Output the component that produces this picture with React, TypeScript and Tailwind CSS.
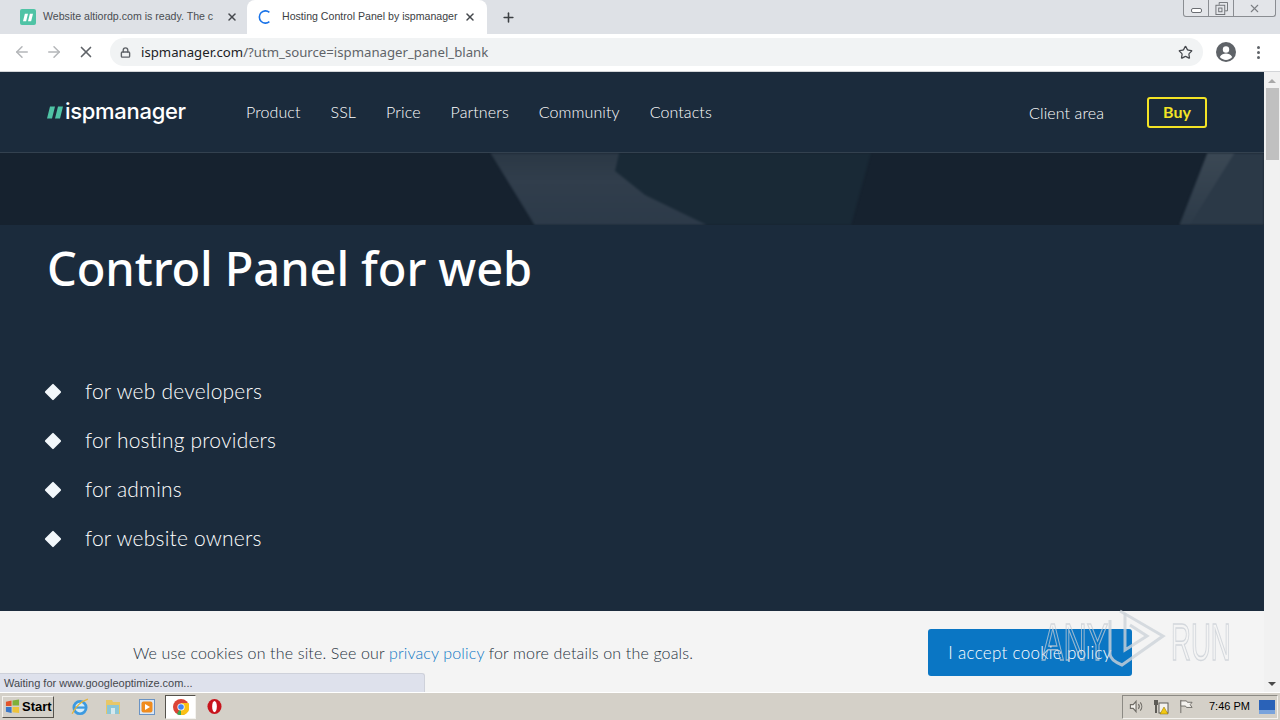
import { ArrowLeft, ArrowRight, Lock, Plus, Star, X } from "lucide-react";

const NAV_ITEMS = ["Product", "SSL", "Price", "Partners", "Community", "Contacts"];
const AUDIENCES = ["for web developers", "for hosting providers", "for admins", "for website owners"];

function LogoMark({ className }: { className: string }) {
  return (
    <svg viewBox="0 0 16 12" className={className}>
      <path d="M3 0h5L5 12H0z M11 0h5l-3 12H8z" fill="#4fc3a5" />
    </svg>
  );
}

function Diamond() {
  return <span className="w-[12px] h-[12px] rotate-45 rounded-[1px] bg-[#f2f7fb] shrink-0" />;
}

function TabStrip() {
  return (
    <div className="h-[34px] bg-[#dee1e6] flex items-end shrink-0 relative font-['Liberation_Sans',sans-serif]">
      <div className="w-[247px] h-[34px] flex items-center pl-[20px] pr-[9px] text-[10.600px] text-[#4a4d52]">
        <span className="w-[16px] h-[16px] rounded-[2px] bg-[#4fc3a5] flex items-center justify-center shrink-0">
          <LogoMark className="w-[10px] h-[9px] [&>path]:fill-white" />
        </span>
        <span className="ml-[7px] whitespace-nowrap">Website altiordp.com is ready. The c</span>
        <X size={12} strokeWidth={3} className="ml-auto text-[#45484d] shrink-0" />
      </div>
      <div className="w-[240px] h-[34px] bg-white rounded-t-[8px] flex items-center pl-[11px] pr-[11px] text-[10.600px] text-[#3c4043]">
        <svg viewBox="0 0 16 16" className="w-[14px] h-[16px] shrink-0">
          <path d="M13 2.600A7 7 0 1 0 13 13.400" fill="none" stroke="#1a73e8" strokeWidth="1.800" />
        </svg>
        <span className="ml-[10px] whitespace-nowrap">Hosting Control Panel by ispmanager</span>
        <X size={12} strokeWidth={3} className="ml-auto text-[#45484d] shrink-0" />
      </div>
      <div className="h-[34px] flex items-center ml-[14px]">
        <Plus size={15} strokeWidth={2.5} className="text-[#3c4043]" />
      </div>
      <div className="absolute right-[4px] top-0 w-[93px] h-[17px] flex border border-t-0 border-[#8a8d92] rounded-b-[3px] bg-[#e3e5e9]">
        <div className="w-[25px] flex items-end justify-center pb-[3px] border-r border-[#8a8d92]">
          <span className="w-[11px] h-[5px] rounded-[2px] border border-[#6b6e73] bg-white" />
        </div>
        <div className="w-[25px] flex items-center justify-center border-r border-[#8a8d92]">
          <svg viewBox="0 0 14 14" className="w-[13px] h-[13px]" fill="none" stroke="#6b6e73">
            <path d="M4.500 3V.5h9v9H11" />
            <rect x="1" y="3.500" width="9.500" height="10" />
            <rect x="4" y="6.500" width="3.500" height="4" />
          </svg>
        </div>
        <div className="flex-1 flex items-center justify-center">
          <X size={13} strokeWidth={2} className="text-[#7b7e83]" />
        </div>
      </div>
    </div>
  );
}

function Toolbar() {
  return (
    <div className="h-[38px] bg-white flex items-center shrink-0 border-b border-[#d3d5d8] pb-[1px]">
      <ArrowLeft size={18} className="ml-[13px] text-[#b4b6b9]" />
      <ArrowRight size={18} className="ml-[14px] text-[#b4b6b9]" />
      <X size={18} strokeWidth={2.2} className="ml-[14px] text-[#5f6368]" />
      <div className="ml-[15px] w-[1093px] h-[28px] rounded-full bg-[#f1f3f4] flex items-center pl-[10px] pr-[10px] text-[13.200px] text-[#5f6368]">
        <Lock size={11} strokeWidth={3} className="text-[#5f6368] shrink-0" />
        <span className="ml-[10px] mt-[1px] whitespace-nowrap">
          <span className="text-[#202124]">ispmanager.com</span>/?utm_source=ispmanager_panel_blank
        </span>
        <Star size={15} strokeWidth={2} className="ml-auto text-[#45484d]" />
      </div>
      <svg viewBox="0 0 20 20" className="ml-[13px] w-[20px] h-[20px] shrink-0">
        <circle cx="10" cy="10" r="10" fill="#5f6368" />
        <circle cx="10" cy="7.500" r="3.200" fill="#fff" />
        <path d="M3.800 15c1.500-2.600 3.800-3.500 6.200-3.500s4.700.9 6.200 3.500c-1.500 1.800-3.700 2.900-6.200 2.900s-4.700-1.100-6.200-2.900z" fill="#fff" />
      </svg>
      <div className="ml-[21px] flex flex-col gap-[2px]">
        <span className="w-[3px] h-[3px] rounded-full bg-[#5f6368]" />
        <span className="w-[3px] h-[3px] rounded-full bg-[#5f6368]" />
        <span className="w-[3px] h-[3px] rounded-full bg-[#5f6368]" />
      </div>
    </div>
  );
}

function SiteHeader() {
  return (
    <header className="h-[81px] bg-[#1b2b3c] border-b border-[#33414f] flex items-center shrink-0 pl-[47px] pr-[57px] font-['Lato',sans-serif] text-white">
      <LogoMark className="w-[16px] h-[13px] mt-[1px]" />
      <span className="ml-[2px] w-[121px] text-[22px] leading-none font-['Inter',sans-serif] font-medium tracking-[-0.3px] pb-[2px] whitespace-nowrap">ispmanager</span>
      <nav className="ml-[60px] flex gap-[30px] text-[16px] font-light tracking-[0.1px]">
        {NAV_ITEMS.map((item) => (
          <span key={item}>{item}</span>
        ))}
      </nav>
      <span className="ml-auto mt-[1px] text-[16px] font-light tracking-[0.1px]">Client area</span>
      <span className="ml-[43px] w-[60px] h-[31px] rounded-[3px] border-2 border-[#f4e425] text-[#f4e425] font-bold text-[16px] flex items-center justify-center">Buy</span>
    </header>
  );
}

function Band() {
  return (
    <div className="h-[72px] bg-[#16222f] shrink-0 overflow-hidden">
      <svg viewBox="0 0 1264 72" className="w-full h-full block blur-[1px]" preserveAspectRatio="none">
        <defs>
          <linearGradient id="band-fade" x1="0" y1="0" x2="0" y2="1">
            <stop offset="0" stopColor="#2a3744" />
            <stop offset="0.4" stopColor="#313e4c" />
            <stop offset="1" stopColor="#2c3a49" />
          </linearGradient>
          <linearGradient id="band-right" x1="0" y1="0" x2="0" y2="1">
            <stop offset="0" stopColor="#3c4955" />
            <stop offset="1" stopColor="#2c3a48" />
          </linearGradient>
        </defs>
        <path d="M600 -4h272l-22 80H590z" fill="#192936" />
        <path d="M488 -4h132l-5 22 30 24 70 34H537z" fill="url(#band-fade)" />
        <path d="M1209 -4h60v80h-91z" fill="#2b3947" />
        <path d="M1209 -4h28l-50 80h-9z" fill="url(#band-right)" />
      </svg>
    </div>
  );
}

function Hero() {
  return (
    <section className="flex-1 bg-[#1b2b3c] pl-[48px] font-['Lato',sans-serif] text-white min-h-0">
      <h1 className="mt-[11px] -ml-[1px] text-[47px] leading-[64px] font-['Noto_Sans',sans-serif] font-medium tracking-[-0.1px]">Control Panel for web</h1>
      <ul className="mt-[77px] flex flex-col gap-[19px]">
        {AUDIENCES.map((a) => (
          <li key={a} className="flex items-center h-[30px] text-[21px] font-light tracking-[0.2px] -ml-[1px]">
            <Diamond />
            <span className="ml-[26px] -translate-y-[1px]">{a}</span>
          </li>
        ))}
      </ul>
    </section>
  );
}

function CookieBar() {
  return (
    <div className="h-[81px] bg-[#f4f4f4] flex items-center shrink-0 pl-[133px] font-['Lato',sans-serif] font-light text-[#25313d]">
      <span className="text-[16px] tracking-[0.15px] mt-[3px]">
        We use cookies on the site. See our <span className="text-[#0a76c4]">privacy policy</span> for more details on the goals.
      </span>
      <span className="ml-auto mr-[132px] mt-[2px] w-[204px] h-[47px] rounded-[3px] bg-[#0a76c4] text-white text-[17px] tracking-[0.3px] flex items-center justify-center whitespace-nowrap">I accept cookie policy</span>
    </div>
  );
}

function Scrollbar() {
  return (
    <div className="w-[16px] bg-[#f1f1f1] flex flex-col items-center shrink-0">
      <span className="mt-[7px] w-0 h-0 border-x-[4px] border-x-transparent border-b-[4px] border-b-[#a8a8a8]" />
      <span className="mt-[5px] w-[13px] h-[72px] bg-[#c0c0c0]" />
      <span className="mt-auto mb-[6px] w-0 h-0 border-x-[4px] border-x-transparent border-t-[4px] border-t-[#4a4a4a]" />
    </div>
  );
}

function Taskbar() {
  return (
    <div className="h-[28px] bg-[#d4d0c8] border-t border-white flex items-center shrink-0 relative">
      <div className="ml-[2px] w-[52px] h-[22px] flex items-center border border-[#f4f2ee] border-b-[#55524c] border-r-[#55524c] bg-[#d4d0c8] font-['Liberation_Sans',sans-serif] font-bold text-[13px] text-black">
        <svg viewBox="0 0 16 16" className="w-[15px] h-[15px] ml-[2px] shrink-0">
          <path d="M1 3l6-1.500V7.500H1z" fill="#e2552b" />
          <path d="M8 1.500l7-1V7H8z" fill="#7fb03a" />
          <path d="M1 8.500h6V15l-6-1.500z" fill="#3b78c9" />
          <path d="M8 8.500h7V15l-7-1z" fill="#eec33a" />
        </svg>
        <span className="ml-[2px]">Start</span>
      </div>
      <svg viewBox="0 0 16 16" className="ml-[17px] w-[18px] h-[18px] shrink-0">
        <circle cx="8" cy="8.500" r="5.500" fill="#d5ecf9" stroke="#3d9ae0" strokeWidth="2.400" />
        <path d="M3 8.500h10" stroke="#3d9ae0" strokeWidth="2" />
        <path d="M1 14C4 8 9 3 15 1" stroke="#e6b53c" strokeWidth="1.200" fill="none" />
      </svg>
      <svg viewBox="0 0 16 16" className="ml-[16px] w-[16px] h-[16px] shrink-0">
        <path d="M1 1h6l1 2h7v12H1z" fill="#e8c767" />
        <path d="M2 6h12v9H2z" fill="#8cc6d6" />
        <path d="M6 9h4v6H6z" fill="#d4e8ee" />
      </svg>
      <svg viewBox="0 0 16 16" className="ml-[18px] w-[16px] h-[16px] shrink-0">
        <rect x="0.500" y="0.500" width="15" height="15" fill="#dbe7f5" stroke="#6a93c4" />
        <rect x="2.500" y="2.500" width="11" height="11" rx="2" fill="#f08c1e" />
        <path d="M6 5l5 3-5 3z" fill="#fff" />
      </svg>
      <div className="ml-[10px] w-[31px] h-[24px] bg-white border border-[#55524c] border-b-[#f4f2ee] border-r-[#f4f2ee] flex items-center justify-center shrink-0">
        <svg viewBox="0 0 16 16" className="w-[16px] h-[16px]">
          <circle cx="8" cy="8" r="8" fill="#db4437" />
          <path d="M8 8L15 12A8 8 0 0 1 4 15z" fill="#3aa757" />
          <path d="M8 4h7.500A8 8 0 0 1 8 16z" fill="#fbc116" />
          <circle cx="8" cy="8" r="3.600" fill="#fff" />
          <circle cx="8" cy="8" r="2.800" fill="#4285f4" />
        </svg>
      </div>
      <svg viewBox="0 0 16 18" className="ml-[11px] w-[15px] h-[17px] shrink-0">
        <ellipse cx="8" cy="9" rx="7.500" ry="8" fill="#c8141c" />
        <ellipse cx="8" cy="9" rx="2.500" ry="6" fill="#fff" />
      </svg>
      <div className="ml-auto mr-[2px] w-[156px] h-[24px] flex items-center border border-[#8c8a84] border-b-[#f4f2ee] border-r-[#f4f2ee] pl-[6px]">
        <svg viewBox="0 0 16 16" className="w-[15px] h-[15px] shrink-0" fill="none" stroke="#6f6c66" strokeWidth="1.200">
          <path d="M1.500 6h3l3-3.500v11l-3-3.500h-3z" fill="#f4f2ee" />
          <path d="M10 5.500a4 4 0 0 1 0 5M12 3.500a7 7 0 0 1 0 9" />
        </svg>
        <svg viewBox="0 0 16 16" className="ml-[9px] w-[16px] h-[16px] shrink-0">
          <path d="M1 1h4v5H4v8H2V6H1z" fill="#5d5b56" />
          <rect x="6" y="4" width="9" height="10" fill="#f4f2ee" stroke="#5d5b56" />
          <path d="M11 8l4 7H7z" fill="#f2c811" stroke="#8a6d00" strokeWidth="0.500" />
        </svg>
        <svg viewBox="0 0 16 16" className="ml-[9px] w-[15px] h-[15px] shrink-0" fill="#f4f2ee" stroke="#6f6c66">
          <path d="M3 1v14" />
          <path d="M3 2h6l1 1.500h5L13 6l2 3H9L8 7.500H3z" />
        </svg>
        <span className="ml-[16px] font-['Liberation_Sans',sans-serif] text-[11px] text-black">7:46 PM</span>
        <svg viewBox="0 0 16 14" className="ml-auto mr-[2px] w-[16px] h-[14px] shrink-0">
          <rect width="16" height="14" fill="#2a62b8" />
          <rect y="10" width="16" height="4" fill="#79a3dc" />
        </svg>
      </div>
    </div>
  );
}

function Watermark() {
  return (
    <div className="absolute left-[1042px] top-[608px] h-[60px] flex items-center pointer-events-none">
      <span className="w-[64px] mt-[8px] font-['Liberation_Sans',sans-serif] text-[52px] leading-none text-transparent whitespace-nowrap scale-x-[0.62] origin-left [-webkit-text-stroke:1.500px_rgba(200,206,212,0.75)]">ANY</span>
      <svg viewBox="0 0 60 60" className="w-[60px] h-[60px] shrink-0" fill="none" stroke="rgba(205,211,217,0.8)" strokeWidth="3">
        <path d="M14 3L57 28 16 57Q4 52 4 46V12" />
        <path d="M19 5V42L41 28 24 17" />
      </svg>
      <span className="w-[62px] ml-[5px] mt-[8px] font-['Liberation_Sans',sans-serif] text-[52px] leading-none text-transparent whitespace-nowrap scale-x-[0.53] origin-left [-webkit-text-stroke:1.500px_rgba(200,206,212,0.75)]">RUN</span>
    </div>
  );
}

export default function App() {
  return (
    <div className="relative w-[1280px] h-[720px] overflow-hidden flex flex-col bg-white font-['Noto_Sans',sans-serif]">
      <TabStrip />
      <Toolbar />
      <div className="flex-1 flex min-h-0">
        <main className="flex-1 flex flex-col min-w-0">
          <SiteHeader />
          <Band />
          <Hero />
          <CookieBar />
        </main>
        <Scrollbar />
      </div>
      <Taskbar />
      <div className="absolute left-0 top-[673px] w-[425px] h-[19px] bg-[#dee1ec] rounded-tr-[3px] border-t border-r border-[#ced1da] pl-[4px] text-[11px] leading-[18px] text-[#45484d] font-['Liberation_Sans',sans-serif]">
        Waiting for www.googleoptimize.com...
      </div>
      <Watermark />
    </div>
  );
}
